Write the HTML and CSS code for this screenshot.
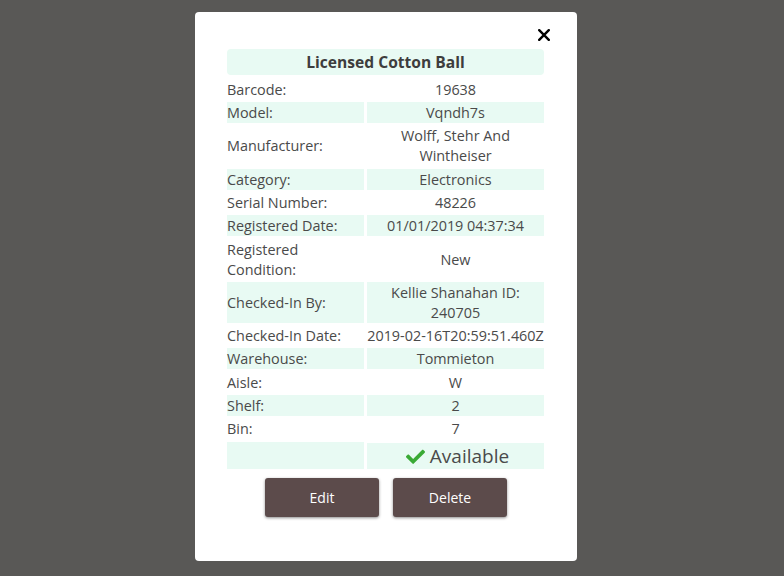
FILE: index.html
```html
<!DOCTYPE html>
<html lang="en">
<head>
<meta charset="utf-8">
<title>Item details</title>
<link rel="stylesheet" href="styles.css">
</head>
<body>
<div class="overlay">
  <div class="modal">
    <div class="modal-head">
      <button class="close" aria-label="Close">
        <svg width="12" height="12" viewBox="0 0 12 12"><path d="M1.2 1.2 L10.8 10.8 M10.8 1.2 L1.2 10.8" stroke="#000" stroke-width="2.4" stroke-linecap="round"/></svg>
      </button>
    </div>
    <div class="details">
      <div class="title">Licensed Cotton Ball</div>
      <div class="lbl">Barcode:</div><div class="val">19638</div>
      <div class="lbl alt">Model:</div><div class="val alt">Vqndh7s</div>
      <div class="lbl">Manufacturer:</div><div class="val">Wolff, Stehr And Wintheiser</div>
      <div class="lbl alt">Category:</div><div class="val alt">Electronics</div>
      <div class="lbl">Serial Number:</div><div class="val">48226</div>
      <div class="lbl alt">Registered Date:</div><div class="val alt">01/01/2019 04:37:34</div>
      <div class="lbl">Registered Condition:</div><div class="val">New</div>
      <div class="lbl alt">Checked-In By:</div><div class="val alt">Kellie Shanahan ID: 240705</div>
      <div class="lbl">Checked-In Date:</div><div class="val">2019-02-16T20:59:51.460Z</div>
      <div class="lbl alt">Warehouse:</div><div class="val alt">Tommieton</div>
      <div class="lbl">Aisle:</div><div class="val">W</div>
      <div class="lbl alt">Shelf:</div><div class="val alt">2</div>
      <div class="lbl">Bin:</div><div class="val">7</div>
      <div class="lbl alt"></div>
      <div class="val alt status">
        <svg class="check" width="19" height="16" viewBox="0 0 512 430"><path fill="#3aaa35" d="M173.9 420.4l-166.4-166.4c-10-10-10-26.2 0-36.2l36.2-36.2c10-10 26.2-10 36.2 0L192 293.7 432.1 53.6c10-10 26.2-10 36.2 0l36.2 36.2c10 10 10 26.2 0 36.2l-294.4 294.4c-10 10-26.2 10-36.2 0z"/></svg>
        <span>Available</span>
      </div>
    </div>
    <div class="actions">
      <button class="btn">Edit</button>
      <button class="btn">Delete</button>
    </div>
  </div>
</div>
</body>
</html>
```
FILE: styles.css
```css
* { box-sizing: border-box; }
html, body { margin: 0; height: 100%; }
body {
  background: #595856;
  font-family: "Open Sans", "Noto Sans", sans-serif;
  color: #4a4a4a;
}
.overlay {
  display: flex;
  align-items: flex-start;
  padding: 12px 0 0 195px;
  height: 100%;
}
.modal {
  width: 382px;
  height: 549px;
  background: #fff;
  border-radius: 4px;
  padding: 0 33px 0 32px;
  display: flex;
  flex-direction: column;
}
.modal-head {
  display: flex;
  justify-content: flex-end;
  padding-top: 17px;
  height: 37px;
}
.close {
  background: none;
  border: 0;
  padding: 0;
  margin-right: -6px;
  width: 12px;
  height: 12px;
  display: flex;
  cursor: pointer;
}
.details {
  display: grid;
  grid-template-columns: 137px 177px;
  column-gap: 3px;
  row-gap: 2.3px;
  font-size: 14.4px;
  line-height: 20px;
}
.title {
  grid-column: 1 / 3;
  background: #e8faf3;
  border-radius: 4px;
  text-align: center;
  font-weight: 700;
  font-size: 15.6px;
  line-height: 26px;
  height: 26px;
  color: #3d3d3d;
  margin-bottom: 1.5px;
}
.lbl, .val {
  padding: 1px 0 0 0;
  display: flex;
  align-items: center;
}
.val { justify-content: center; text-align: center; }
.alt { background: #e8faf3; }
.status {
  height: 26px;
  font-size: 19px;
  gap: 5px;
  margin-top: 1px;
  padding-left: 4px;
}
.status span { line-height: 26px; }
.check { display: block; }
.actions {
  display: flex;
  justify-content: center;
  gap: 14px;
  margin-top: 9px;
  padding-left: 1px;
}
.btn {
  width: 114px;
  height: 39px;
  background: #5c4b4b;
  color: #fff;
  border: 0;
  border-radius: 3px;
  font-family: "Open Sans", "Noto Sans", sans-serif;
  font-size: 14px;
  box-shadow: 0 1px 3px rgba(0,0,0,0.45);
}
```
